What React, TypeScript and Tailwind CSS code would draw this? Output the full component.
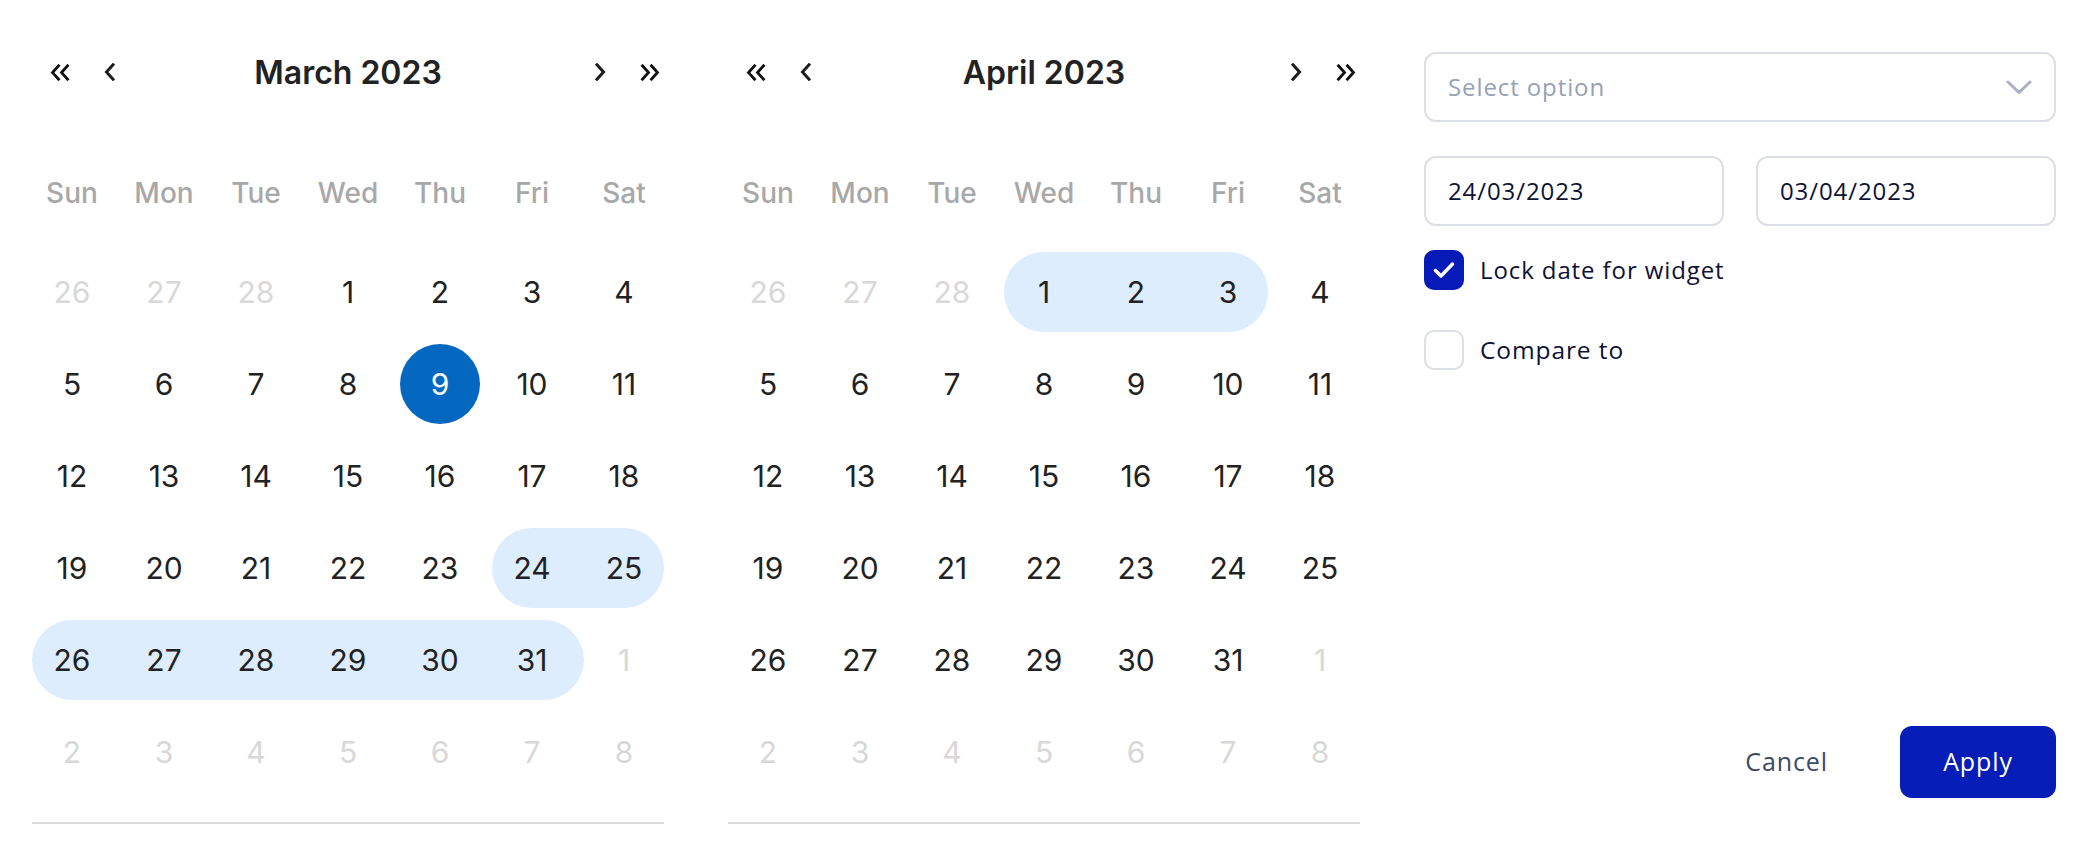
import React from "react";

const ROW = ["row-start-1", "row-start-2", "row-start-3", "row-start-4", "row-start-5", "row-start-6"];
const COL = ["col-start-1", "col-start-2", "col-start-3", "col-start-4", "col-start-5", "col-start-6", "col-start-7"];

type Day = { d: number; o?: boolean };

const ROWS: Day[][] = [
  [{ d: 26, o: true }, { d: 27, o: true }, { d: 28, o: true }, { d: 1 }, { d: 2 }, { d: 3 }, { d: 4 }],
  [5, 6, 7, 8, 9, 10, 11].map((d) => ({ d })),
  [12, 13, 14, 15, 16, 17, 18].map((d) => ({ d })),
  [19, 20, 21, 22, 23, 24, 25].map((d) => ({ d })),
  [{ d: 26 }, { d: 27 }, { d: 28 }, { d: 29 }, { d: 30 }, { d: 31 }, { d: 1, o: true }],
  [2, 3, 4, 5, 6, 7, 8].map((d) => ({ d, o: true })),
];

const WEEK = ["Sun", "Mon", "Tue", "Wed", "Thu", "Fri", "Sat"];

function ChevLeft() {
  return (
    <svg width="11" height="18" viewBox="0 0 11 18" fill="none">
      <polyline points="9,1.8 2.5,9 9,16.2" stroke="#1c1c1c" strokeWidth="3" strokeLinecap="square" />
    </svg>
  );
}
function ChevRight() {
  return (
    <svg width="11" height="18" viewBox="0 0 11 18" fill="none">
      <polyline points="2,1.8 8.5,9 2,16.2" stroke="#1c1c1c" strokeWidth="3" strokeLinecap="square" />
    </svg>
  );
}
function DblLeft() {
  return (
    <svg width="20" height="17" viewBox="0 0 20 17" fill="none">
      <polyline points="8.5,1.8 2.5,8.5 8.5,15.2" stroke="#111" strokeWidth="2.8" strokeLinecap="square" />
      <polyline points="17.5,1.8 11.5,8.5 17.5,15.2" stroke="#111" strokeWidth="2.8" strokeLinecap="square" />
    </svg>
  );
}
function DblRight() {
  return (
    <svg width="20" height="17" viewBox="0 0 20 17" fill="none">
      <polyline points="2.5,1.8 8.5,8.5 2.5,15.2" stroke="#111" strokeWidth="2.8" strokeLinecap="square" />
      <polyline points="11.5,1.8 17.5,8.5 11.5,15.2" stroke="#111" strokeWidth="2.8" strokeLinecap="square" />
    </svg>
  );
}

function Calendar({ title, pills, selected }: { title: string; pills: string[]; selected?: [number, number] }) {
  return (
    <div className="w-[632px] shrink-0 font-['Inter',sans-serif]">
      <div className="grid h-16 grid-cols-[1fr_auto_1fr] items-center">
        <div className="flex items-center gap-[34px] pl-[18px]">
          <DblLeft />
          <ChevLeft />
        </div>
        <div className="pt-[2px] text-[32px] font-semibold text-[#222222] leading-none">{title}</div>
        <div className="flex items-center justify-end gap-[34px] pr-[4px]">
          <ChevRight />
          <DblRight />
        </div>
      </div>
      <div className="mt-[65px] grid h-12 grid-cols-[repeat(7,80px)] gap-x-3 items-center">
        {WEEK.map((w) => (
          <div key={w} className="text-center text-[28px] font-medium text-[#A8A8A8]">
            {w}
          </div>
        ))}
      </div>
      <div className="mt-[35px] grid grid-cols-[repeat(7,80px)] auto-rows-[80px] gap-3">
        {pills.map((p, i) => (
          <div key={"p" + i} className={p} />
        ))}
        {ROWS.map((row, r) =>
          row.map((day, c) => {
            const isSel = selected && selected[0] === r && selected[1] === c;
            return (
              <div key={r + "-" + c} className={`${ROW[r]} ${COL[c]} flex items-center justify-center`}>
                {isSel ? (
                  <span className="flex h-20 w-20 items-center justify-center rounded-full bg-[#0468C1] text-[30px] text-white">
                    {day.d}
                  </span>
                ) : (
                  <span className={`text-[30px] ${day.o ? "text-[#D8D8D8]" : "text-[#222222]"}`}>{day.d}</span>
                )}
              </div>
            );
          })
        )}
      </div>
      <div className="mt-[30px] h-[2px] w-[632px] bg-[#DADADA]" />
    </div>
  );
}

export default function App() {
  return (
    <div className="h-[856px] w-[2088px] overflow-hidden bg-white">
      <div className="flex items-start gap-16 pl-8 pt-10">
        <Calendar
          title="March 2023"
          selected={[1, 4]}
          pills={[
            "row-start-4 col-start-6 col-end-8 rounded-full bg-[#DDEDFD]",
            "row-start-5 col-start-1 col-end-7 -mr-3 rounded-full bg-[#DDEDFD]",
          ]}
        />
        <Calendar title="April 2023" pills={["row-start-1 col-start-4 col-end-7 rounded-full bg-[#DDEDFD]"]} />
        <div className="mt-3 flex w-[632px] shrink-0 flex-col font-['Open_Sans',sans-serif] tracking-[0.9px]">
          <div className="flex h-[70px] items-center justify-between rounded-[12px] border-2 border-[#DCDFE5] pl-[22px] pr-[22px]">
            <span className="text-[24px] text-[#97A1B5]">Select option</span>
            <svg width="26" height="15" viewBox="0 0 26 15" fill="none">
              <polyline points="2,2 13,12.5 24,2" stroke="#A8B0C3" strokeWidth="3" strokeLinecap="round" strokeLinejoin="round" />
            </svg>
          </div>
          <div className="mt-[34px] flex gap-8">
            <div className="flex h-[70px] w-[300px] items-center rounded-[12px] border-2 border-[#DCDFE5] pl-[22px] text-[24px] text-[#0E1236]">
              24/03/2023
            </div>
            <div className="flex h-[70px] w-[300px] items-center rounded-[12px] border-2 border-[#DCDFE5] pl-[22px] text-[24px] text-[#0E1236]">
              03/04/2023
            </div>
          </div>
          <div className="mt-6 flex items-center gap-4">
            <div className="flex h-10 w-10 items-center justify-center rounded-[10px] bg-[#061AB8]">
              <svg width="40" height="40" viewBox="0 0 40 40" fill="none">
                <polyline points="11.5,20.5 17,26 28.5,14" stroke="white" strokeWidth="3.5" strokeLinecap="round" strokeLinejoin="round" />
              </svg>
            </div>
            <span className="text-[24px] text-[#0E1236]">Lock date for widget</span>
          </div>
          <div className="mt-10 flex items-center gap-4">
            <div className="h-10 w-10 rounded-[10px] border-2 border-[#DCDFE5] bg-white" />
            <span className="text-[24.5px] text-[#0E1236]">Compare to</span>
          </div>
          <div className="mt-[356px] flex items-center justify-end gap-[72px]">
            <button className="text-[25px] text-[#3D4A66]">Cancel</button>
            <button className="flex h-[72px] w-[156px] items-center justify-center rounded-[12px] bg-[#061DB8] text-[25px] text-white">
              Apply
            </button>
          </div>
        </div>
      </div>
    </div>
  );
}
